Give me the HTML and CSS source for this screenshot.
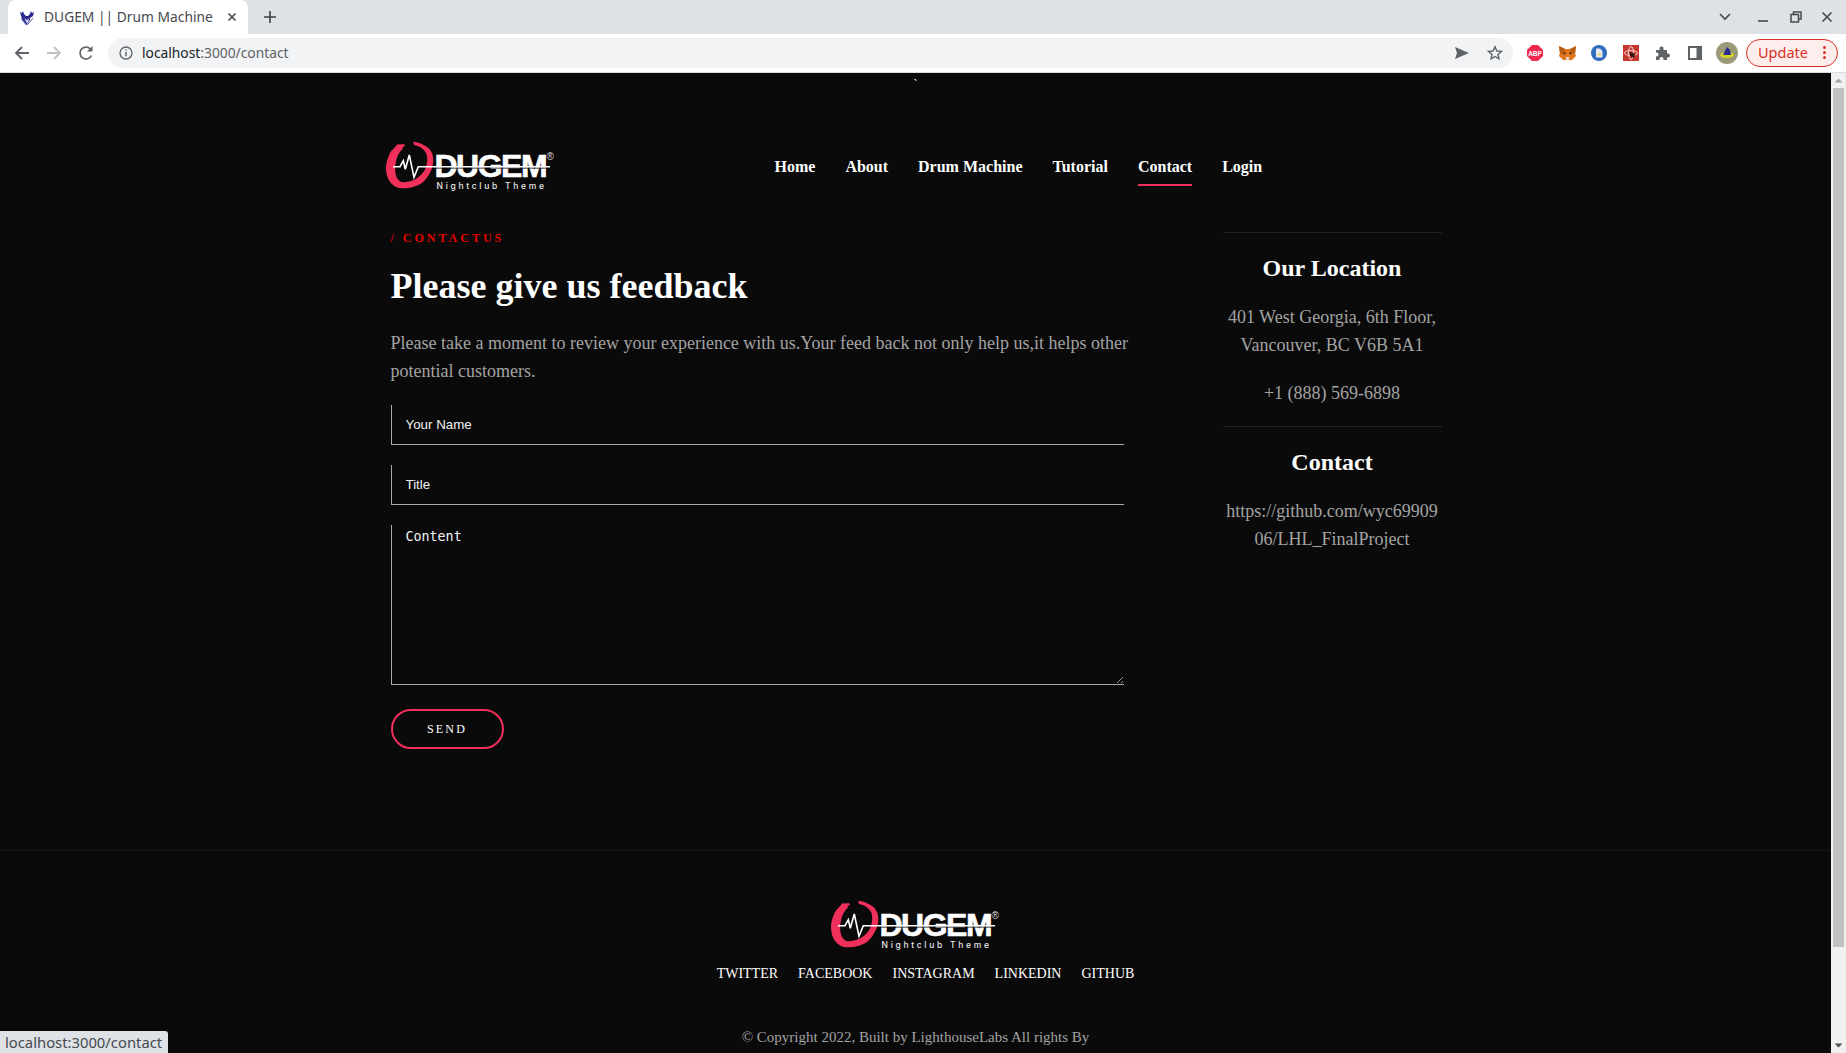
FILE: index.html
```html
<!DOCTYPE html>
<html lang="en">
<head>
    <meta charset="UTF-8">
    <title>DUGEM || Drum Machine</title>
    <link rel="stylesheet" href="styles.css">
</head>
<body>

    <div class="chrome">
        <div class="tabstrip">
            <div class="tab">
                <svg class="favicon" width="16" height="16" viewBox="0 0 16 16">
                    <path d="M1 3l2 1 1-2 1 3 2 2h2l2-2 1-3 1 2 2-1-1 4-3 2v2l-3 4-1 1-1-1-3-4V9L2 7z" fill="#2b2a8c"/>
                    <path d="M5.500 9L8 11l2.500-2L9 13l-1 1-1-1z" fill="#cfcfee"/>
                    <path d="M2 9l3 4 3 3 3-3 3-4" fill="none" stroke="#6a69b8" stroke-width="1"/>
                </svg>
                <span class="tab-title">DUGEM || Drum Machine</span>
                <svg class="tab-close" width="10" height="10" viewBox="0 0 10 10"><path d="M1.500 1.500l7 7M8.500 1.500l-7 7" stroke="#45494e" stroke-width="1.600"/></svg>
            </div>
            <svg class="new-tab" width="14" height="14" viewBox="0 0 14 14"><path d="M7 1v12M1 7h12" stroke="#3c4043" stroke-width="1.600"/></svg>
            <div class="win-controls">
                <svg width="12" height="8" viewBox="0 0 12 8"><path d="M1 1l5 5 5-5" fill="none" stroke="#45494e" stroke-width="1.600"/></svg>
                <svg class="win-min" width="12" height="12" viewBox="0 0 12 12"><path d="M1 10h10" stroke="#45494e" stroke-width="1.600"/></svg>
                <svg class="win-max" width="12" height="12" viewBox="0 0 12 12"><path d="M3.500 3V1h7.500v7H9M1 3.500h7.500V11H1z" fill="none" stroke="#45494e" stroke-width="1.500"/></svg>
                <svg class="win-close" width="12" height="12" viewBox="0 0 12 12"><path d="M1.500 1.500l9 9M10.500 1.500l-9 9" stroke="#45494e" stroke-width="1.600"/></svg>
            </div>
        </div>
        <div class="toolbar">
            <svg class="tool-nav" width="16" height="16" viewBox="0 0 16 16"><path d="M15 8H2M8 2L2 8l6 6" fill="none" stroke="#5f6368" stroke-width="1.800"/></svg>
            <svg class="tool-nav" width="16" height="16" viewBox="0 0 16 16"><path d="M1 8h13M8 2l6 6-6 6" fill="none" stroke="#bdc1c6" stroke-width="1.800"/></svg>
            <svg class="tool-nav" width="16" height="16" viewBox="0 0 16 16"><path d="M13.500 10.500A6 6 0 1 1 12.300 3.800" fill="none" stroke="#5f6368" stroke-width="1.700"/><path d="M14.500 1v5.500H9z" fill="#5f6368"/></svg>
            <div class="omnibox">
                <svg width="14" height="14" viewBox="0 0 14 14"><circle cx="7" cy="7" r="6" fill="none" stroke="#5f6368" stroke-width="1.300"/><path d="M7 6v4.200M7 3.500v1.300" stroke="#5f6368" stroke-width="1.400"/></svg>
                <span class="url"><span class="url-host">localhost</span>:3000/contact</span>
                <svg class="omni-send" width="16" height="14" viewBox="0 0 16 14"><path d="M1 1l14 6-14 6 2-6z" fill="#5f6368"/></svg>
                <svg class="omni-star" width="16" height="16" viewBox="0 0 16 16"><path d="M8 1.800l1.900 4.200 4.500.4-3.400 3 1 4.500L8 11.500l-4 2.400 1-4.500-3.400-3 4.500-.4z" fill="none" stroke="#5f6368" stroke-width="1.400"/></svg>
            </div>
            <div class="ext-row">
                <svg width="16" height="16" viewBox="0 0 16 16"><path d="M5 0h6l5 5v6l-5 5H5l-5-5V5z" fill="#f0284f"/><text x="8" y="10.500" class="abp-text" text-anchor="middle">ABP</text></svg>
                <svg width="17" height="16" viewBox="0 0 17 16">
                    <path d="M0 1l6 3h5l6-3-1 7 1 3-4 4H9H8H4l-4-4 1-3z" fill="#e2761b"/>
                    <path d="M4 6l3 2-2 2zM13 6l-3 2 2 2z" fill="#3d2a1a"/>
                    <path d="M0 1l6 3-1 4-4 1zM17 1l-6 3 1 4 4 1z" fill="#b95f14"/>
                    <path d="M6.500 12h4L9.500 15h-2z" fill="#e8d7c8"/>
                </svg>
                <svg width="16" height="16" viewBox="0 0 16 16"><circle cx="8" cy="8" r="8" fill="#2f6dbd"/><path d="M5 3.500h4l2.500 2.500v6.500H5z" fill="#e6eaf2"/><path d="M6.500 9.500h3.500" stroke="#e8c94a" stroke-width="1.500"/></svg>
                <svg width="16" height="16" viewBox="0 0 16 16"><path d="M0 0h16v16H0z" fill="#c8372f"/><ellipse cx="8" cy="8" rx="6.500" ry="2.500" fill="none" stroke="#f3d5d2" stroke-width="1"/><ellipse cx="8" cy="8" rx="2.500" ry="6.500" fill="none" stroke="#f3d5d2" stroke-width="1"/><path d="M7 7l5 2-1 4-4-2z" fill="#33150f"/></svg>
                <svg class="ext-puzzle" width="16" height="16" viewBox="0 0 16 16"><path d="M1 5h3.500V3.500a2 2 0 0 1 4 0V5H12v3.500h1a2 2 0 0 1 0 4h-1V15H8.500v-1a2 2 0 0 0-4 0v1H1v-3.500h.5a2 2 0 0 0 0-4H1z" fill="#5f6368"/></svg>
                <svg class="ext-side" width="14" height="14" viewBox="0 0 14 14"><path d="M1 1h12v12H1z" fill="none" stroke="#5f6368" stroke-width="2"/><path d="M8.500 1H13v12H8.500z" fill="#5f6368"/></svg>
                <svg class="ext-avatar" width="22" height="22" viewBox="0 0 22 22"><circle cx="11" cy="11" r="11" fill="#9b9a78"/><ellipse cx="11" cy="13" rx="7" ry="3" fill="#d8d620"/><path d="M7 13l4-8 3 3 1 5z" fill="#2c2a8c"/></svg>
            </div>
            <div class="update-btn">
                <span class="update-label">Update</span>
                <span class="update-dots"><i></i><i></i><i></i></span>
            </div>
        </div>
    </div>

    <div class="viewport">
        <div class="page">
            <div class="stray">`</div>

            <div class="container">
                <header class="site-header">
                    <a class="logo" href="#">
                        <span class="logo-word">DUGEM</span>
                        <span class="logo-sub">Nightclub Theme</span>
                        <span class="logo-reg">®</span>
                        <svg class="logo-mark" width="170" height="50" viewBox="0 0 170 50">
                            <path d="M12.300 3C5 9 0 18 0 27.300C0 40 8 47.300 15.700 47.300C27 47.300 35 44 39 39C45 32 47.300 25 47.300 19C47.300 12 44 8 40.700 5.700C36 2.500 32 1 27.300.7L28 4C34 5 38.500 8.500 40.500 13C42 18 41 24 39 28.500C36 34 31 38 26.500 39.500C22 41 19 41.500 15.700 41C12.500 40 10 36.500 9.500 32.300C9 28 9 24 10 20.700C11 15 14 10 17.300 7.300Z" fill="#f0305a"/>
                            <path d="M10 4l8-1 1 2-6 3zM3 14l3-5 5 1-4 6z" fill="#f0305a"/>
                            <path d="M46 27h118" stroke="#0a0a0a" stroke-width="1"/>
                            <path d="M7 25.700h7l3.300-6 2 8.600 4-14.300 4.700 22.300 4.300-10.600H164" fill="none" stroke="#fff" stroke-width="1.600"/>
                        </svg>
                    </a>
                    <nav class="main-nav">
                        <a href="#">Home</a>
                        <a href="#">About</a>
                        <a href="#">Drum Machine</a>
                        <a href="#">Tutorial</a>
                        <a href="#" class="active">Contact</a>
                        <a href="#">Login</a>
                    </nav>
                </header>

                <div class="contact-grid">
                    <section class="feedback">
                        <div class="tagline">/ CONTACTUS</div>
                        <h1>Please give us feedback</h1>
                        <p class="intro">Please take a moment to review your experience with us.Your feed back not only help us,it helps other potential customers.</p>
                        <form class="feedback-form">
                            <input type="text" placeholder="Your Name">
                            <input type="text" placeholder="Title">
                            <textarea placeholder="Content"></textarea>
                            <button type="button">SEND</button>
                        </form>
                    </section>
                    <aside class="side">
                        <div class="side-block">
                            <h3>Our Location</h3>
                            <p>401 West Georgia, 6th Floor, Vancouver, BC V6B 5A1</p>
                            <p class="side-phone">+1 (888) 569-6898</p>
                        </div>
                        <div class="side-block">
                            <h3>Contact</h3>
                            <p class="side-link">https://github.com/wyc6990906/LHL_FinalProject</p>
                        </div>
                    </aside>
                </div>
            </div>

            <footer class="site-footer">
                <a class="logo" href="#">
                    <span class="logo-word">DUGEM</span>
                    <span class="logo-sub">Nightclub Theme</span>
                    <span class="logo-reg">®</span>
                    <svg class="logo-mark" width="170" height="50" viewBox="0 0 170 50">
                        <path d="M12.300 3C5 9 0 18 0 27.300C0 40 8 47.300 15.700 47.300C27 47.300 35 44 39 39C45 32 47.300 25 47.300 19C47.300 12 44 8 40.700 5.700C36 2.500 32 1 27.300.7L28 4C34 5 38.500 8.500 40.500 13C42 18 41 24 39 28.500C36 34 31 38 26.500 39.500C22 41 19 41.500 15.700 41C12.500 40 10 36.500 9.500 32.300C9 28 9 24 10 20.700C11 15 14 10 17.300 7.300Z" fill="#f0305a"/>
                        <path d="M10 4l8-1 1 2-6 3zM3 14l3-5 5 1-4 6z" fill="#f0305a"/>
                        <path d="M46 27h118" stroke="#0a0a0a" stroke-width="1"/>
                        <path d="M7 25.700h7l3.300-6 2 8.600 4-14.300 4.700 22.300 4.300-10.600H164" fill="none" stroke="#fff" stroke-width="1.600"/>
                    </svg>
                </a>
                <div class="footer-links">
                    <a href="#">TWITTER</a>
                    <a href="#">FACEBOOK</a>
                    <a href="#">INSTAGRAM</a>
                    <a href="#">LINKEDIN</a>
                    <a href="#">GITHUB</a>
                </div>
                <div class="copyright">© Copyright 2022, Built by LighthouseLabs All rights By</div>
            </footer>
        </div>

        <div class="scrollbar">
            <svg width="15" height="15" viewBox="0 0 15 15"><path d="M3.500 9.500L7.500 5.500l4 4z" fill="#a3a3a3"/></svg>
            <div class="scroll-thumb"></div>
            <svg width="15" height="15" viewBox="0 0 15 15"><path d="M3.500 5.500L7.500 9.500l4-4z" fill="#505050"/></svg>
        </div>
    </div>

    <div class="status-bubble">localhost:3000/contact</div>

</body>
</html>
```

FILE: styles.css
```css
* {
    box-sizing: border-box;
}

html, body {
    height: 100%;
    overflow: hidden;
}

body {
    margin: 0;
    display: flex;
    flex-direction: column;
    background-color: #0a0a0a;
    font-family: "Liberation Serif", serif;
    color: #fff;
}

a {
    color: inherit;
    text-decoration: none;
}

/* browser chrome */
.chrome {
    flex: none;
    height: 73px;
    font-family: "Noto Sans", sans-serif;
}

.tabstrip {
    height: 34px;
    background-color: #dee1e6;
    display: flex;
    align-items: center;
    padding-left: 8px;
}

.tab {
    width: 240px;
    height: 34px;
    background-color: #fff;
    border-radius: 8px 8px 0 0;
    display: flex;
    align-items: center;
    padding: 0 11px;
}

.tab-title {
    margin: 0 0 2px 9px;
    font-size: 13.800px;
    color: #45494e;
    white-space: nowrap;
}

.tab-close {
    margin-left: auto;
}

.new-tab {
    margin-left: 15px;
}

.win-controls {
    margin-left: auto;
    display: flex;
    align-items: center;
    padding-right: 13px;
}

.win-min {
    margin-left: 26px;
}

.win-max {
    margin-left: 21px;
}

.win-close {
    margin-left: 19px;
}

.toolbar {
    height: 39px;
    background-color: #fff;
    border-bottom: 1px solid #dadce0;
    display: flex;
    align-items: center;
    padding-left: 14px;
    padding-bottom: 1px;
}

.tool-nav {
    margin-right: 16px;
}

.omnibox {
    width: 1405px;
    height: 30px;
    margin-left: -2px;
    background-color: #f1f3f4;
    border-radius: 15px;
    display: flex;
    align-items: center;
    padding: 0 10px 0 11px;
}

.url {
    margin-left: 9px;
    font-size: 13.800px;
    color: #5f6368;
}

.url-host {
    color: #202124;
}

.omni-send {
    margin-left: auto;
}

.omni-star {
    margin-left: 17px;
}

.ext-row {
    display: flex;
    align-items: center;
    gap: 15.500px;
    margin-left: 14px;
}

.ext-puzzle {
    margin-left: 1px;
}

.ext-side {
    margin-left: 1px;
}

.ext-avatar {
    margin-left: -1px;
}

.abp-text {
    font-family: "Liberation Sans", sans-serif;
    font-size: 6.500px;
    font-weight: bold;
    fill: #fff;
}

.update-btn {
    width: 92px;
    height: 28px;
    margin-left: 8px;
    background-color: #fdeeed;
    border: 1px solid #d93025;
    border-radius: 14px;
    display: flex;
    align-items: center;
    padding-left: 11px;
    font-size: 14.500px;
    color: #d93025;
}

.update-label {
    margin-bottom: 2px;
}

.update-dots {
    margin-left: auto;
    margin-right: 11px;
    display: flex;
    flex-direction: column;
    gap: 2px;
}

.update-dots i {
    width: 3px;
    height: 3px;
    border-radius: 50%;
    background-color: #d93025;
}

/* page */
.viewport {
    flex: 1;
    min-height: 0;
    display: flex;
}

.page {
    flex: 1;
    min-width: 0;
    overflow: hidden;
}

.stray {
    height: 16px;
    padding-top: 5px;
    font-size: 12px;
    line-height: 12px;
    text-align: center;
}

.container {
    width: 1050px;
    margin: 0 auto;
}

.site-header {
    display: flex;
    align-items: center;
    margin: 52px 0 0 -5px;
    height: 50px;
}

.logo {
    display: block;
    position: relative;
    flex: none;
    width: 170px;
    height: 50px;
    padding: 14px 0 0 49px;
}

.logo-mark {
    position: absolute;
    left: 0;
    top: 0;
}

.logo-word {
    display: block;
    font-family: "Liberation Sans", sans-serif;
    font-size: 32px;
    line-height: 22px;
    font-weight: bold;
    letter-spacing: -1.500px;
    color: #fff;
    -webkit-text-stroke: 0.600px #fff;
}

.logo-sub {
    display: block;
    margin: 4px 0 0 2px;
    font-family: Inter, sans-serif;
    font-size: 8.500px;
    line-height: 10px;
    font-weight: 500;
    letter-spacing: 2.700px;
    white-space: nowrap;
    color: #e8e8e8;
}

.logo-reg {
    position: absolute;
    left: 161px;
    top: 11px;
    font-family: "Liberation Sans", sans-serif;
    font-size: 10px;
    line-height: 10px;
    color: #ddd;
}

.main-nav {
    display: flex;
    gap: 30px;
    margin-left: 219px;
    padding-top: 5px;
}

.main-nav a {
    padding: 6px 0 8px;
    border-bottom: 2px solid transparent;
    font-size: 16px;
    font-weight: bold;
    color: #fff;
}

.main-nav a.active {
    border-bottom-color: #f0305a;
}

.contact-grid {
    display: grid;
    grid-template-columns: 750px 219px;
    column-gap: 82px;
    margin-top: 41px;
}

.tagline {
    font-size: 12px;
    line-height: 13px;
    font-weight: bold;
    letter-spacing: 3px;
    color: #e60000;
}

h1 {
    margin: 21px 0 0;
    font-size: 36px;
    line-height: 40px;
    font-weight: bold;
}

.intro {
    margin: 23px 0 0;
    font-size: 18px;
    line-height: 28px;
    color: #a3a3a3;
}

.feedback-form {
    display: flex;
    flex-direction: column;
    align-items: flex-start;
    margin-top: 20px;
}

.feedback-form input,
.feedback-form textarea {
    display: block;
    width: 733px;
    background-color: transparent;
    border: none;
    border-left: 1px solid #aaa;
    border-bottom: 1px solid #aaa;
    border-radius: 0;
    padding: 0 14px;
    color: #fff;
    outline: none;
}

.feedback-form input {
    height: 40px;
    margin-bottom: 20px;
    font-family: "Liberation Sans", sans-serif;
    font-size: 13.333px;
}

.feedback-form textarea {
    height: 160px;
    padding-top: 4px;
    font-family: "DejaVu Sans Mono", monospace;
    font-size: 13.333px;
}

.feedback-form input::placeholder,
.feedback-form textarea::placeholder {
    color: #f2f2f2;
    opacity: 1;
}

.feedback-form button {
    width: 113px;
    height: 40px;
    margin-top: 24px;
    background-color: transparent;
    border: 2px solid #f0305a;
    border-radius: 20px;
    font-family: "Liberation Serif", serif;
    font-size: 12px;
    letter-spacing: 2.200px;
    color: #fff;
}

.side-block {
    border-top: 1px solid #222;
    padding-top: 20px;
    text-align: center;
}

.side h3 {
    margin: 0 0 20px;
    font-size: 24px;
    line-height: 30px;
    font-weight: bold;
}

.side p {
    margin: 0 0 20px;
    font-size: 18px;
    line-height: 28px;
    color: #a3a3a3;
}

.side p.side-phone {
    margin-bottom: 19px;
}

.side-link {
    word-break: break-all;
}

.site-footer {
    margin-top: 101px;
    border-top: 1px solid #151515;
    padding-top: 49px;
    display: flex;
    flex-direction: column;
    align-items: center;
}

.footer-links {
    display: flex;
    gap: 20px;
    margin-top: 14px;
    padding-left: 20px;
    font-size: 14px;
    line-height: 20px;
}

.copyright {
    margin-top: 43px;
    font-size: 15px;
    line-height: 20px;
    color: #a3a3a3;
}

.scrollbar {
    flex: none;
    width: 15px;
    background-color: #f1f1f1;
    display: flex;
    flex-direction: column;
    justify-content: space-between;
}

.scroll-thumb {
    flex: 1;
    margin: 0 2px 91px 2px;
    background-color: #c1c1c1;
}

.status-bubble {
    position: absolute;
    left: 0;
    bottom: 0;
    height: 22px;
    padding: 0 6px 0 5px;
    background-color: #dee1e6;
    border-radius: 0 3px 0 0;
    font-family: "Noto Sans", sans-serif;
    font-size: 14.800px;
    line-height: 22px;
    color: #45494e;
}
```
